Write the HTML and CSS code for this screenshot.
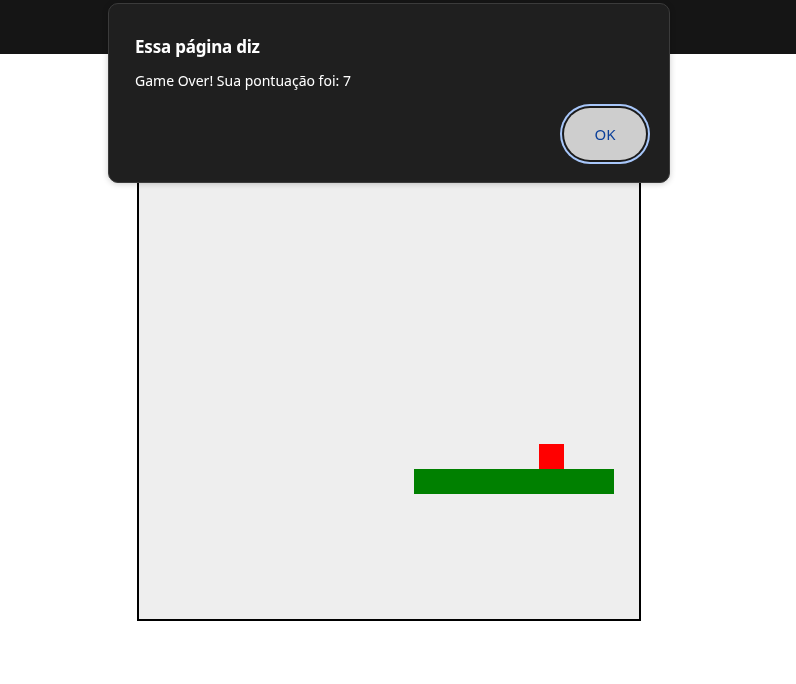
FILE: index.html
```html
<!DOCTYPE html>
<html lang="pt-BR">
<head>
<meta charset="utf-8">
<title>Snake</title>
<link rel="stylesheet" href="styles.css">
</head>
<body>
<header class="topbar"></header>
<main class="stage">
  <div class="board">
    <div class="cell snake" style="grid-column: 12 / span 8; grid-row: 15;"></div>
    <div class="cell food" style="grid-column: 17; grid-row: 14;"></div>
  </div>
</main>
<div class="dialog" role="alertdialog">
  <h2 class="dialog-title">Essa página diz</h2>
  <p class="dialog-msg">Game Over! Sua pontuação foi: 7</p>
  <div class="dialog-actions">
    <button class="ok-btn">OK</button>
  </div>
</div>
</body>
</html>
```
FILE: styles.css
```css
html, body {
  margin: 0;
  padding: 0;
  background: #ffffff;
  font-family: "Noto Sans", "Open Sans", sans-serif;
}

.topbar {
  height: 54px;
  background: #151515;
}

.stage {
  padding: 63px 0 0 137px;
}

.board {
  width: 500px;
  height: 500px;
  border: 2px solid #000;
  background: #eeeeee;
  display: grid;
  grid-template-columns: repeat(20, 25px);
  grid-template-rows: repeat(20, 25px);
}

.snake { background: #008000; }
.food { background: #ff0000; }

.dialog {
  position: fixed;
  top: 3px;
  left: 108px;
  width: 560px;
  height: 178px;
  box-sizing: content-box;
  background: #1f1f1f;
  border: 1px solid #3b3b3b;
  border-radius: 10px;
  box-shadow: 0 1px 6px rgba(0, 0, 0, 0.2);
  display: flex;
  flex-direction: column;
  padding: 0;
  color: #ffffff;
}

.dialog-title {
  margin: 31px 0 0 26px;
  font-size: 17px;
  font-weight: 700;
  line-height: 24px;
  letter-spacing: -0.2px;
}

.dialog-msg {
  margin: 12px 0 0 26px;
  font-size: 14px;
  line-height: 20px;
  letter-spacing: 0;
}

.dialog-actions {
  display: flex;
  justify-content: flex-end;
  padding: 17px 23px 0 0;
}

.ok-btn {
  width: 82px;
  height: 52px;
  border: none;
  border-radius: 26px;
  background: #cecece;
  color: #0a3f9a;
  font-family: "Noto Sans", "Open Sans", sans-serif;
  font-size: 15px;
  box-shadow: 0 0 0 2px #1b1b1b, 0 0 0 4px #a8c7fa;
  padding: 0;
}
```
